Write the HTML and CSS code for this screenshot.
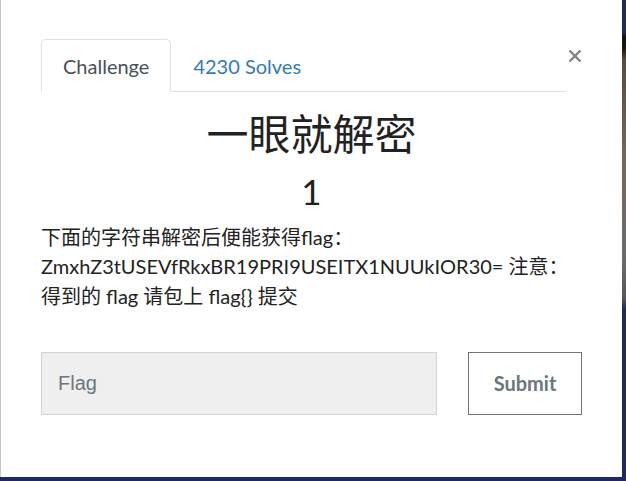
FILE: index.html
```html
<!DOCTYPE html>
<html lang="zh-CN">
<head>
    <meta charset="UTF-8">
    <title>一眼就解密</title>
    <meta name="viewport" content="width=device-width, initial-scale=1.0">
    <link rel="stylesheet" href="styles.css">
</head>
<body>
    <div class="modal">
        <div class="modal-top">
            <ul class="nav-tabs">
                <li><a class="nav-link active" href="#challenge">Challenge</a></li>
                <li><a class="nav-link" href="#solves">4230 Solves</a></li>
            </ul>
            <button class="close" aria-label="Close">
                <svg width="14" height="14" viewBox="0 0 14 14">
                    <path d="M1.5 1.5 L12.5 12.5 M12.5 1.5 L1.5 12.5" stroke="#808080" stroke-width="2.3" fill="none"/>
                </svg>
            </button>
        </div>

        <h2 class="challenge-name">一眼就解密</h2>
        <h3 class="challenge-value">1</h3>
        <p class="challenge-desc">
            下面的字符串解密后便能获得flag：<br>
            ZmxhZ3tUSEVfRkxBR19PRI9USEITX1NUUkIOR30= 注意：<br>
            得到的 flag 请包上 flag{} 提交
        </p>

        <form class="submit-row">
            <input type="text" class="flag-input" placeholder="Flag">
            <button type="button" class="submit-btn">Submit</button>
        </form>
    </div>
</body>
</html>
```

FILE: styles.css
```css
* {
    box-sizing: border-box;
}

body {
    margin: 0;
    height: 481px;
    overflow: hidden;
    font-family: Lato, "Noto Sans CJK SC", sans-serif;
    color: #222;
    background-color: #1e2a5c;
    background-image:
        linear-gradient(#1e2a5c, #1e2a5c 33px, #121212 37px, #1a1410 48px, #5c4a3a 60px, #75685c 160px, #6f6a66 260px, #56565a 298px, #1e2a5c 310px);
    background-repeat: no-repeat;
    background-size: 100% 420px;
}

.modal {
    width: 622px;
    height: 477px;
    background: #fff;
    border-left: 1px solid #c6c6c6;
    padding: 39px 40px 0 40px;
}

.modal-top {
    display: flex;
}

.nav-tabs {
    flex: 1;
    display: flex;
    list-style: none;
    margin: 0;
    padding: 0;
    border-bottom: 1px solid #dee2e6;
}

.nav-link {
    display: block;
    margin-bottom: -1px;
    padding: 10.5px 21px;
    font-size: 20px;
    line-height: 30px;
    color: #337ab7;
    text-decoration: none;
    border: 1px solid transparent;
    border-top-left-radius: 5px;
    border-top-right-radius: 5px;
}

.nav-link.active {
    color: #495057;
    background: #fff;
    border-color: #dee2e6 #dee2e6 #fff;
}

.close {
    align-self: flex-start;
    width: 16px;
    margin-top: 10px;
    padding: 0 0 0 1px;
    border: none;
    background: none;
    line-height: 0;
    cursor: pointer;
}

.challenge-name {
    margin: 15px 0 0;
    font-family: "Noto Sans CJK SC", sans-serif;
    font-size: 42px;
    font-weight: 400;
    line-height: 1.2;
    text-align: center;
}

.challenge-value {
    margin: 12.5px 0 0;
    font-size: 35px;
    font-weight: 400;
    line-height: 1.2;
    text-align: center;
}

.challenge-desc {
    margin: 11px 0 0;
    font-size: 20px;
    line-height: 29.6px;
}

.submit-row {
    display: flex;
    gap: 31px;
    margin-top: 40px;
}

.flag-input {
    flex: 1;
    height: 63px;
    padding: 0 16px;
    font-family: "Liberation Sans", Arial, sans-serif;
    font-size: 20px;
    color: #495057;
    background: #efefef;
    border: 1px solid #d3d3d3;
    border-radius: 0;
}

.flag-input::placeholder {
    color: #6c757d;
}

.submit-btn {
    width: 114px;
    height: 63px;
    font-family: Lato, sans-serif;
    font-size: 20px;
    font-weight: 700;
    color: #6c757d;
    background: #fff;
    border: 1px solid #6c757d;
    border-radius: 0;
    cursor: pointer;
}
```
